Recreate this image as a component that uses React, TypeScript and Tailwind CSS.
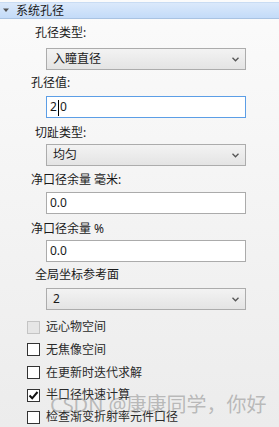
import React from "react";

const font = { fontFamily: '"Noto Sans", "Noto Sans CJK SC", sans-serif' };

function Chevron() {
  return (
    <svg width="7" height="5" viewBox="0 0 7 5" className="absolute right-[6px] top-[8px]">
      <path d="M0.5 0.8 L3.5 3.8 L6.5 0.8" fill="none" stroke="#555" strokeWidth="1.3" />
    </svg>
  );
}

function Select({ value, mt }: { value: string; mt: string }) {
  return (
    <div
      className={`relative ml-[46px] w-[200px] h-[22px] border border-[#acacac] bg-gradient-to-b from-[#f3f3f3] to-[#e4e4e4] flex items-center pl-[6px] text-[12px] text-[#1a1a1a] ${mt}`}
    >
      {value}
      <Chevron />
    </div>
  );
}

function Input({ children, mt, focus }: { children: React.ReactNode; mt: string; focus?: boolean }) {
  return (
    <div
      className={`ml-[46px] w-[200px] h-[22px] border bg-white flex items-center pl-[3px] text-[12px] text-[#1a1a1a] ${
        focus ? "border-[#5c9ee6]" : "border-[#ababab]"
      } ${mt}`}
    >
      {children}
    </div>
  );
}

function Label({ text, ml, mt }: { text: string; ml: string; mt: string }) {
  return <div className={`h-[16px] leading-[16px] text-[12px] text-[#1a1a1a] ${ml} ${mt}`}>{text}</div>;
}

function Check({ label, state, h }: { label: string; state: "off" | "on" | "disabled"; h: string }) {
  return (
    <div className={`flex items-center ${h}`}>
      <div
        className={`ml-[27px] w-[13px] h-[13px] border flex items-center justify-center ${
          state === "disabled" ? "bg-[#e6e6e6] border-[#c4c4c4]" : "bg-white border-[#333333]"
        }`}
      >
        {state === "on" && (
          <svg width="11" height="11" viewBox="0 0 11 11">
            <path d="M1.5 5.5 L4.2 8.3 L9.5 2" fill="none" stroke="#111" strokeWidth="2" />
          </svg>
        )}
      </div>
      <span className="ml-[6px] text-[12px] text-[#2a2a2a]">{label}</span>
    </div>
  );
}

export default function App() {
  return (
    <div
      className="relative w-[279px] h-[427px] overflow-hidden bg-gradient-to-b from-[#fbfbfb] to-[#ececec] pt-[2px]"
      style={font}
    >
      <div className="h-[17px] border-t border-b border-t-[#c9dcf3] border-b-[#a9c3e2] bg-gradient-to-b from-[#dbe9fb] to-[#c3dbf8] flex items-center">
        <svg width="7" height="5" viewBox="0 0 7 5" className="ml-[3px]">
          <path d="M0 0.5 L6 0.5 L3 4 Z" fill="#555" />
        </svg>
        <span className="ml-[6px] text-[12px] text-[#1a1a1a] leading-[15px]">系统孔径</span>
      </div>

      <Label text="孔径类型:" ml="ml-[35px]" mt="mt-[6px]" />
      <Select value="入瞳直径" mt="mt-[7px]" />

      <Label text="孔径值:" ml="ml-[31px]" mt="mt-[5px]" />
      <Input mt="mt-[5px]" focus>
        <span>2</span>
        <span className="inline-block w-[1px] h-[16px] bg-black mx-[1px] translate-y-[1px]" />
        <span>0</span>
      </Input>

      <Label text="切趾类型:" ml="ml-[35px]" mt="mt-[7px]" />
      <Select value="均匀" mt="mt-[3px]" />

      <Label text="净口径余量 毫米:" ml="ml-[31px]" mt="mt-[6px]" />
      <Input mt="mt-[4px]">0.0</Input>

      <Label text="净口径余量 %" ml="ml-[31px]" mt="mt-[7px]" />
      <Input mt="mt-[3px]">0.0</Input>

      <Label text="全局坐标参考面" ml="ml-[35px]" mt="mt-[5px]" />
      <Select value="2" mt="mt-[5px]" />

      <div className="mt-[6px] flex flex-col">
        <Check label="远心物空间" state="disabled" h="h-[22px]" />
        <Check label="无焦像空间" state="off" h="h-[23px]" />
        <Check label="在更新时迭代求解" state="off" h="h-[23px]" />
        <Check label="半口径快速计算" state="on" h="h-[22px]" />
        <Check label="检查渐变折射率元件口径" state="off" h="h-[22px]" />
      </div>

      <div className="absolute left-[50px] top-[393px] text-[20px] leading-[24px] text-[rgba(140,140,140,0.55)] whitespace-nowrap">
        CSDN @康康同学，你好
      </div>
    </div>
  );
}
